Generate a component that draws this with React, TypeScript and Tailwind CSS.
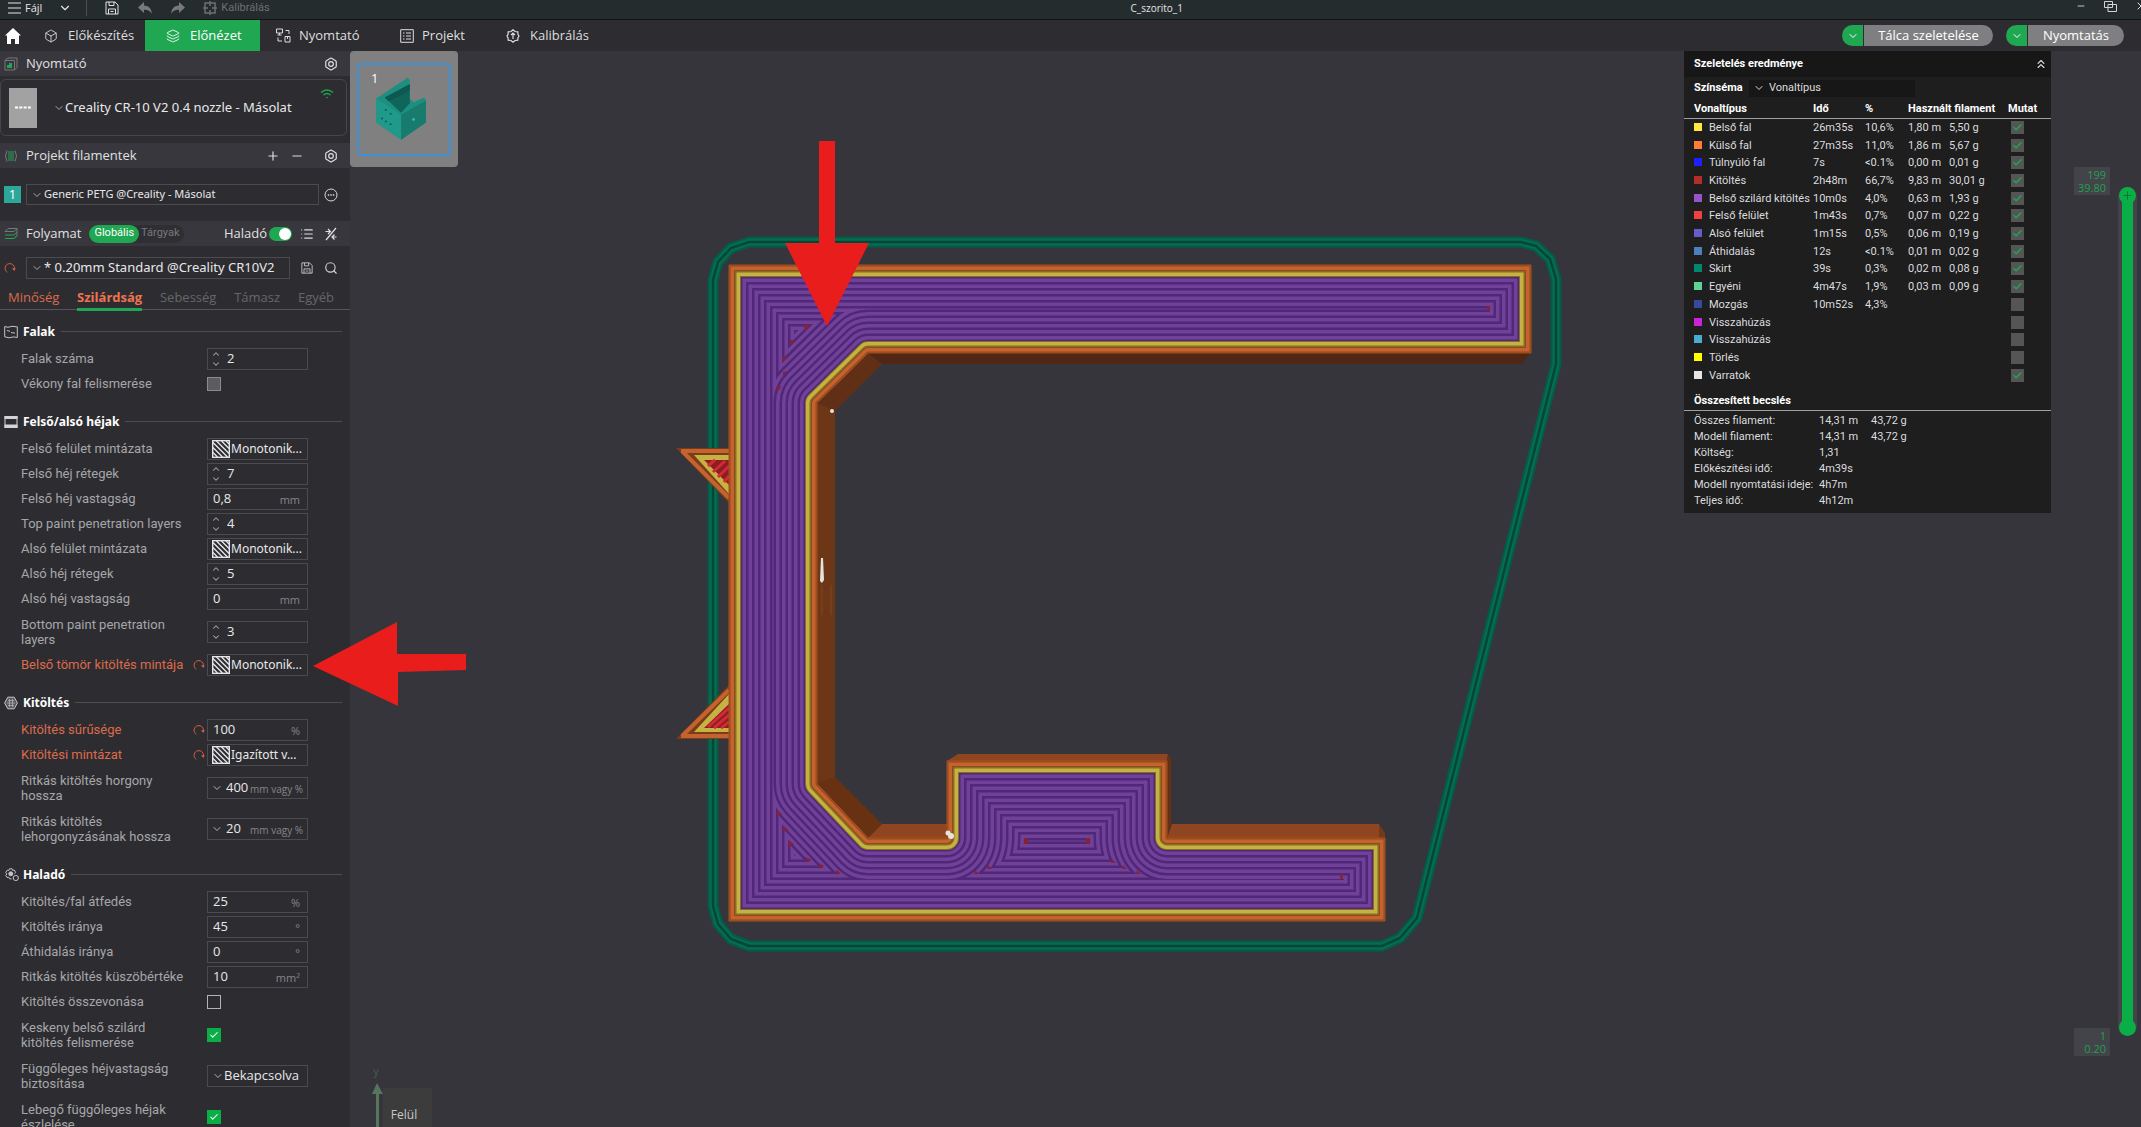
import type { ReactNode } from 'react'
import {
  Bolt,
  Box,
  Check,
  ChevronDown,
  ChevronsUp,
  ChevronUp,
  Layers,
  List,
  Minus,
  Plus,
  Search,
  X,
} from 'lucide-react'

type Control =
  | { kind: 'spin'; value: string }
  | { kind: 'text'; value: string; unit: string }
  | { kind: 'combo'; value: string; unit: string }
  | { kind: 'pattern'; value: string }
  | { kind: 'select'; value: string }
  | { kind: 'check'; checked: boolean; disabled?: boolean }

interface Setting {
  label: string
  control: Control
  /** Differs from the preset, shown in orange with a reset arrow */
  modified?: boolean
}

interface Section {
  title: string
  icon: ReactNode
  settings: Setting[]
}

const SECTIONS: Section[] = [
  {
    title: 'Falak',
    icon: (
      <svg viewBox="0 0 14 14" className="size-3.5" fill="none" stroke="#c4c4c6">
        <path d="M.7 1.500 4 2.300 8 1.300l5.300.6v10.600l-4-.6-4 .9-4.600-1zM3 5.500l3 .8M7 7.500l4 .6" />
      </svg>
    ),
    settings: [
      { label: 'Falak száma', control: { kind: 'spin', value: '2' } },
      { label: 'Vékony fal felismerése', control: { kind: 'check', checked: false, disabled: true } },
    ],
  },
  {
    title: 'Felső/alsó héjak',
    icon: (
      <svg viewBox="0 0 14 14" className="size-3.5" fill="#d4d4d6">
        <path d="M.5 1h13v3H.5zM.5 9.500h13v3.500H.5z" />
        <path d="M.5 1h1v12h-1zM12.500 1h1v12h-1z" />
      </svg>
    ),
    settings: [
      { label: 'Felső felület mintázata', control: { kind: 'pattern', value: 'Monotonik...' } },
      { label: 'Felső héj rétegek', control: { kind: 'spin', value: '7' } },
      { label: 'Felső héj vastagság', control: { kind: 'text', value: '0,8', unit: 'mm' } },
      { label: 'Top paint penetration layers', control: { kind: 'spin', value: '4' } },
      { label: 'Alsó felület mintázata', control: { kind: 'pattern', value: 'Monotonik...' } },
      { label: 'Alsó héj rétegek', control: { kind: 'spin', value: '5' } },
      { label: 'Alsó héj vastagság', control: { kind: 'text', value: '0', unit: 'mm' } },
      { label: 'Bottom paint penetration layers', control: { kind: 'spin', value: '3' } },
      {
        label: 'Belső tömör kitöltés mintája',
        control: { kind: 'pattern', value: 'Monotonik...' },
        modified: true,
      },
    ],
  },
  {
    title: 'Kitöltés',
    icon: (
      <svg viewBox="0 0 14 14" className="size-3.5" fill="#5c5c60" stroke="#c4c4c6">
        <path d="M3.800 1.200h6.400L13.400 7l-3.200 5.800H3.800L.6 7z" />
        <path d="M4 4.500h6M3 7h8M4 9.500h6M5.500 3v8M8.500 3v8" strokeWidth=".6" />
      </svg>
    ),
    settings: [
      { label: 'Kitöltés sűrűsége', control: { kind: 'text', value: '100', unit: '%' }, modified: true },
      { label: 'Kitöltési mintázat', control: { kind: 'pattern', value: 'Igazított v...' }, modified: true },
      { label: 'Ritkás kitöltés horgony hossza', control: { kind: 'combo', value: '400', unit: 'mm vagy %' } },
      {
        label: 'Ritkás kitöltés lehorgonyzásának hossza',
        control: { kind: 'combo', value: '20', unit: 'mm vagy %' },
      },
    ],
  },
  {
    title: 'Haladó',
    icon: (
      <svg viewBox="0 0 15 14" className="h-3.5 w-4" fill="none" stroke="#c4c4c6">
        <path d="M5 .8h2.600l.5 1.600 1.700-.3 1.300 2.200-1 1.400M5 .8l-.6 1.600-1.700-.2L1.200 4.500l1.200 1.400-1.200 1.400 1.400 2.200 1.700-.2.8 1.500h2" />
        <circle cx="6.300" cy="5.800" r="2" fill="#c4c4c6" />
        <circle cx="11.300" cy="10" r="2.600" />
      </svg>
    ),
    settings: [
      { label: 'Kitöltés/fal átfedés', control: { kind: 'text', value: '25', unit: '%' } },
      { label: 'Kitöltés iránya', control: { kind: 'text', value: '45', unit: '°' } },
      { label: 'Áthidalás iránya', control: { kind: 'text', value: '0', unit: '°' } },
      { label: 'Ritkás kitöltés küszöbértéke', control: { kind: 'text', value: '10', unit: 'mm²' } },
      { label: 'Kitöltés összevonása', control: { kind: 'check', checked: false } },
      { label: 'Keskeny belső szilárd kitöltés felismerése', control: { kind: 'check', checked: true } },
      { label: 'Függőleges héjvastagság biztosítása', control: { kind: 'select', value: 'Bekapcsolva' } },
      { label: 'Lebegő függőleges héjak észlelése', control: { kind: 'check', checked: true } },
    ],
  },
]

const LINE_TYPES = [
  { color: 'bg-[#ffe640]', name: 'Belső fal', time: '26m35s', pct: '10,6%', m: '1,80 m', g: '5,50 g', on: true },
  { color: 'bg-[#ff7d38]', name: 'Külső fal', time: '27m35s', pct: '11,0%', m: '1,86 m', g: '5,67 g', on: true },
  { color: 'bg-[#1f1fff]', name: 'Túlnyúló fal', time: '7s', pct: '<0.1%', m: '0,00 m', g: '0,01 g', on: true },
  { color: 'bg-[#b03029]', name: 'Kitöltés', time: '2h48m', pct: '66,7%', m: '9,83 m', g: '30,01 g', on: true },
  { color: 'bg-[#9654cc]', name: 'Belső szilárd kitöltés', time: '10m0s', pct: '4,0%', m: '0,63 m', g: '1,93 g', on: true },
  { color: 'bg-[#f04040]', name: 'Felső felület', time: '1m43s', pct: '0,7%', m: '0,07 m', g: '0,22 g', on: true },
  { color: 'bg-[#665cc7]', name: 'Alsó felület', time: '1m15s', pct: '0,5%', m: '0,06 m', g: '0,19 g', on: true },
  { color: 'bg-[#4d80ba]', name: 'Áthidalás', time: '12s', pct: '<0.1%', m: '0,01 m', g: '0,02 g', on: true },
  { color: 'bg-[#00876e]', name: 'Skirt', time: '39s', pct: '0,3%', m: '0,02 m', g: '0,08 g', on: true },
  { color: 'bg-[#5ed194]', name: 'Egyéni', time: '4m47s', pct: '1,9%', m: '0,03 m', g: '0,09 g', on: true },
  { color: 'bg-[#38489b]', name: 'Mozgás', time: '10m52s', pct: '4,3%', m: '', g: '', on: false },
  { color: 'bg-[#cd22d6]', name: 'Visszahúzás', time: '', pct: '', m: '', g: '', on: false },
  { color: 'bg-[#49adcf]', name: 'Visszahúzás', time: '', pct: '', m: '', g: '', on: false },
  { color: 'bg-[#ffff00]', name: 'Törlés', time: '', pct: '', m: '', g: '', on: false },
  { color: 'bg-[#e6e6e6]', name: 'Varratok', time: '', pct: '', m: '', g: '', on: true },
]

const TOTALS = [
  ['Összes filament:', '14,31 m', '43,72 g'],
  ['Modell filament:', '14,31 m', '43,72 g'],
  ['Költség:', '1,31', ''],
  ['Előkészítési idő:', '4m39s', ''],
  ['Modell nyomtatási ideje:', '4h7m', ''],
  ['Teljes idő:', '4h12m', ''],
]

function FloppyIcon({ className }: { className: string }) {
  return (
    <svg viewBox="0 0 14 14" className={className} fill="none" stroke="currentColor" aria-hidden="true">
      <path d="M1 1h9l3 3v9H1zM4 1v3.500h5V1M3.500 13V8h7v5M5.500 10.500h3" />
    </svg>
  )
}

function ResetIcon({ className }: { className: string }) {
  return (
    <svg viewBox="0 0 12 12" className={className} fill="none" stroke="#d9603f" aria-hidden="true">
      <path d="M3.300 10.300A4.700 4.700 0 1 1 10.500 6.500" />
      <path d="M8 6.200h3.800L10.300 9z" fill="#d9603f" stroke="none" />
    </svg>
  )
}

function HatchIcon() {
  return (
    <svg viewBox="0 0 18 18" className="size-[18px] shrink-0" fill="none" stroke="#e6e6e8" aria-hidden="true">
      <rect x=".7" y=".7" width="16.600" height="16.600" strokeWidth="1.400" />
      <path d="M1 12.500 5.500 17M1 7.500 10.500 17M1 2.500 15.500 17M4.500 1 17 13.500M9.500 1 17 8.500M14 1l3 3" strokeWidth="1.400" />
    </svg>
  )
}

function CheckBox({ id, checked, disabled = false }: { id: string; checked: boolean; disabled?: boolean }) {
  return (
    <span className="relative flex size-3.5">
      <input
        id={id}
        type="checkbox"
        defaultChecked={checked}
        disabled={disabled}
        className="size-3.5 appearance-none border border-[#b4b4b6] checked:border-[#0aae46] checked:bg-[#0aae46] disabled:border-[#8b8b8e] disabled:bg-[#5c5c60]"
      />
      {checked && (
        <Check className="pointer-events-none absolute inset-0.5 size-2.5 text-white" strokeWidth={2.5} />
      )}
    </span>
  )
}

function SettingControl({ id, control }: { id: string; control: Control }) {
  if (control.kind === 'check') {
    return <CheckBox id={id} checked={control.checked} disabled={control.disabled} />
  }

  return (
    <div className="flex h-[22px] w-[101px] items-center border border-[#4b4b4f] text-[#e8e8ea]">
      {control.kind === 'spin' && (
        <>
          <span className="flex w-[19px] shrink-0 flex-col items-start pl-0.5 text-[#a8a8aa]">
            <ChevronUp className="h-2.5 w-3" strokeWidth={2.5} />
            <ChevronDown className="h-2.5 w-3" strokeWidth={2.5} />
          </span>
          <input id={id} defaultValue={control.value} className="w-16 min-w-0 bg-transparent outline-none" />
        </>
      )}
      {control.kind === 'text' && (
        <>
          <input id={id} defaultValue={control.value} className="w-0 min-w-0 flex-1 bg-transparent pl-[5px] outline-none" />
          <span className="pt-1 pr-[7px] text-[11px] text-[#85858a]">{control.unit}</span>
        </>
      )}
      {control.kind === 'combo' && (
        <>
          <ChevronDown className="mr-[3px] ml-[3px] size-3 shrink-0 text-[#b4b4b6]" strokeWidth={2} />
          <input id={id} defaultValue={control.value} className="w-0 min-w-0 flex-1 bg-transparent outline-none" />
          <span className="pt-1 pr-1 text-[10px] whitespace-nowrap text-[#85858a]">{control.unit}</span>
        </>
      )}
      {control.kind === 'pattern' && (
        <>
          <span className="flex pl-1">
            <HatchIcon />
          </span>
          <select
            id={id}
            className="min-w-0 flex-1 appearance-none overflow-hidden bg-transparent pl-px font-['Noto_Sans',sans-serif] text-[12px] outline-none"
          >
            <option>{control.value}</option>
          </select>
        </>
      )}
      {control.kind === 'select' && (
        <>
          <ChevronDown className="ml-1 size-3 shrink-0 text-[#b4b4b6]" strokeWidth={2} />
          <select id={id} className="min-w-0 flex-1 appearance-none bg-transparent outline-none">
            <option>{control.value}</option>
          </select>
        </>
      )}
    </div>
  )
}

function SettingsSection({ section }: { section: Section }) {
  return (
    <section className="mb-[11px]">
      <div className="flex h-[29px] items-center pr-2 pl-1">
        <span className="flex w-[19px] shrink-0">{section.icon}</span>
        <h3 className="font-['Noto_Sans',sans-serif] text-[12px] font-bold text-white">{section.title}</h3>
        <span className="ml-1.5 h-px flex-1 bg-[#4d4d51]" />
      </div>
      {section.settings.map((s, i) => {
        const id = `${section.title}-${i}`
        return (
          <div key={id} className={`flex items-center pl-[21px] ${s.label.length > 28 ? 'h-[41px]' : 'h-[25px]'}`}>
            <label
              htmlFor={id}
              className={`mr-1 w-[168px] shrink-0 font-[Roboto,sans-serif] leading-[15px] ${s.modified ? 'text-[#dd6a4b]' : 'text-[#a6a6a9]'}`}
            >
              {s.label}
            </label>
            <span className="w-3.5 shrink-0">{s.modified && <ResetIcon className="size-3" />}</span>
            <SettingControl id={id} control={s.control} />
          </div>
        )
      })}
    </section>
  )
}

function PanelHeader({ icon, title, children }: { icon: ReactNode; title: string; children: ReactNode }) {
  return (
    <div className="flex h-[25px] items-center bg-[#37373d] pr-3 pl-1 text-[#e0e0e2]">
      <span className="flex w-[22px] shrink-0">{icon}</span>
      <h2>{title}</h2>
      {children}
    </div>
  )
}

function Sidebar() {
  return (
    <aside className="flex w-[350px] shrink-0 flex-col overflow-hidden bg-[#2d2d31] text-[13px]">
      <PanelHeader
        title="Nyomtató"
        icon={
          <svg viewBox="0 0 14 14" className="size-3.5" fill="none" stroke="#77777b">
            <path d="M1 3.500 3.500 1H13v9.500L10.500 13H1zM10.500 3.500V13M1 3.500h9.500" />
            <path d="M3 11V8h2V6h3v5z" fill="#1fa851" stroke="none" />
          </svg>
        }
      >
        <button aria-label="Nyomtató beállításai" className="ml-auto">
          <Bolt className="size-3.5" />
        </button>
      </PanelHeader>
      <div className="mt-[3px] mr-[3px] flex h-[57px] items-center rounded-md border border-[#47474b] pr-3 pl-2">
        <svg viewBox="0 0 28 40" className="h-10 w-7 shrink-0" aria-hidden="true">
          <path d="M0 0h28v40H0z" fill="#a2a2a3" />
          <path d="M6 19.500h16" stroke="#fff" strokeWidth="2" strokeDasharray="3 1.300" />
        </svg>
        <ChevronDown className="ml-4 size-3 shrink-0 text-[#a8a8aa]" strokeWidth={2} />
        <select
          aria-label="Nyomtató"
          className="flex-1 appearance-none bg-transparent font-['Noto_Sans',sans-serif] text-[#e8e8ea] outline-none"
        >
          <option>Creality CR-10 V2 0.4 nozzle - Másolat</option>
        </select>
        <svg viewBox="0 0 14 12" className="mb-7 h-3 w-3.5 shrink-0" fill="none" stroke="#1fa851" strokeWidth="1.400">
          <path d="M1 4.500Q7-.5 13 4.500M3.500 7Q7 4 10.500 7" />
          <circle cx="7" cy="9.500" r=".8" fill="#1fa851" stroke="none" />
        </svg>
      </div>

      <div className="mt-[7px]">
        <PanelHeader
          title="Projekt filamentek"
          icon={
            <svg viewBox="0 0 14 14" className="size-3.5" fill="none" stroke="#77777b">
              <path d="M3 1.500Q0 7 3 12.500M11 1.500Q14 7 11 12.500" />
              <path d="M5 2v10M7 2v10M9 2v10" stroke="#1fa851" />
            </svg>
          }
        >
          <button aria-label="Hozzáadás" className="ml-auto">
            <Plus className="size-3.5" />
          </button>
          <button aria-label="Eltávolítás" className="ml-2.5">
            <Minus className="size-3.5" />
          </button>
          <button aria-label="Filament beállításai" className="ml-5">
            <Bolt className="size-3.5" />
          </button>
        </PanelHeader>
      </div>
      <div className="mt-4 flex h-[21px] items-center pr-3 pl-1">
        <span className="mr-[5px] flex size-[17px] items-center justify-center bg-[#2ba89a] text-white">1</span>
        <div className="flex h-[21px] flex-1 items-center border border-[#4b4b4f]">
          <ChevronDown className="ml-1 size-3 shrink-0 text-[#a8a8aa]" strokeWidth={2} />
          <select
            aria-label="Filament"
            className="flex-1 appearance-none bg-transparent pl-px font-['Noto_Sans',sans-serif] text-[11px] text-[#e8e8ea] outline-none"
          >
            <option>Generic PETG @Creality - Másolat</option>
          </select>
        </div>
        <button aria-label="Továbbiak" className="ml-[5px]">
          <svg viewBox="0 0 14 14" className="size-3.5" fill="none" stroke="#d8d8da">
            <circle cx="7" cy="7" r="6" />
            <path d="M3.800 7h6.400" strokeWidth="1.300" strokeDasharray="1.400 1.100" />
          </svg>
        </button>
      </div>

      <div className="mt-4">
        <PanelHeader
          title="Folyamat"
          icon={
            <svg viewBox="0 0 14 14" className="size-3.5" fill="none" stroke="#77777b">
              <path d="M1 4.500 4 1.500h9l-3 3zM1 11.500h9l3-3v-7" />
              <path d="M1 8h9l3-3M1 11.500h9l3-3" stroke="#1fa851" />
            </svg>
          }
        >
          <div className="ml-2 flex h-[18px] items-center rounded-full bg-[#2f2f33] pr-1 font-[Roboto,sans-serif] text-[11px]">
            <button className="h-[18px] rounded-full bg-[#1fa851] px-[5px] text-white">Globális</button>
            <button className="pl-0.5 text-[#77777b]">Tárgyak</button>
          </div>
          <label htmlFor="advanced" className="ml-auto">
            Haladó
          </label>
          <span className="relative ml-0.5 flex">
            <input
              id="advanced"
              type="checkbox"
              role="switch"
              defaultChecked
              className="h-3.5 w-[23px] appearance-none rounded-full bg-[#1fa851]"
            />
            <span className="pointer-events-none absolute top-px right-px size-3 rounded-full bg-white" />
          </span>
          <button aria-label="Lista" className="ml-2">
            <List className="size-3.5" />
          </button>
          <button aria-label="Összehasonlítás" className="ml-2.5">
            <svg viewBox="0 0 14 14" className="size-3.5" fill="none" stroke="#e0e0e2" strokeWidth="1.200">
              <path d="M12 1 2 13M1.500 4.500H6M4 2l2.500 2.500L4 7M12.500 10H8M10.500 7.500 8 10l2.500 2.500" />
            </svg>
          </button>
        </PanelHeader>
      </div>
      <div className="mt-[11px] flex h-[22px] items-center pr-3 pl-1">
        <ResetIcon className="mr-2.5 size-3" />
        <div className="mr-[11px] flex h-[22px] flex-1 items-center border border-[#4b4b4f]">
          <ChevronDown className="ml-1 size-3 shrink-0 text-[#a8a8aa]" strokeWidth={2} />
          <select
            aria-label="Folyamat"
            className="flex-1 appearance-none bg-transparent pl-px font-['Noto_Sans',sans-serif] text-[#e8e8ea] outline-none"
          >
            <option>* 0.20mm Standard @Creality CR10V2</option>
          </select>
        </div>
        <button aria-label="Mentés">
          <FloppyIcon className="size-3 text-[#d0d0d2]" />
        </button>
        <button aria-label="Keresés" className="ml-[11px] text-[#d0d0d2]">
          <Search className="size-3.5" />
        </button>
      </div>

      <nav className="mt-[7px] flex h-6 items-center justify-between border-b border-[#55555a] pr-4 pl-2 text-[#66666a]">
        <button className="text-[#dd6a4b]">Minőség</button>
        <button className="relative h-6 font-bold text-[#ee7350]">
          Szilárdság
          <span className="absolute inset-x-0 -bottom-px h-[3px] bg-[#1fa851]" />
        </button>
        <button>Sebesség</button>
        <button>Támasz</button>
        <button>Egyéb</button>
      </nav>

      <div className="min-h-0 flex-1 overflow-hidden pt-[7px]">
        {SECTIONS.map((s) => (
          <SettingsSection key={s.title} section={s} />
        ))}
      </div>
    </aside>
  )
}

const PART =
  'M729 265H1531V353H868L817 403V784L868 838H947V761H1167V838H1385V921H729Z'
const SKIRT =
  'M749 242H1521L1536 246 1550 259 1556 279V364L1417 918 1400 938 1382 946H749L731 939 718 924 713 906V280L718 262 731 248Z'

/** Extrusion lines from the innermost outwards, each one 6 units wide */
const RINGS = Array.from({ length: 14 }, (_, i) => 13 - i)

function ringColors(i: number) {
  if (i === 0) return ['#8f4a1e', '#c5622e']
  if (i === 1) return ['#85701f', '#c6b243']
  return ['#502878', '#71419a']
}

function Toolpaths() {
  return (
    <svg
      viewBox="350 51 1791 1076"
      preserveAspectRatio="xMidYMid meet"
      className="pointer-events-none absolute inset-0 h-full w-full overflow-visible"
      aria-label="Szeletelt rétegek"
    >
      <clipPath id="part">
        <path d={PART} />
      </clipPath>

      <g fill="none">
        <path d={SKIRT} stroke="#045c47" strokeWidth="11" />
        <path d={SKIRT} stroke="#066c52" strokeWidth="7" />
        <path d={SKIRT} stroke="#034737" strokeWidth="2.500" />
      </g>

      {/* side walls below the visible layer */}
      <path d="M868 353H1531L1521 364H882Z" fill="#4f2714" />
      <path d="M868 353 882 364 835 411 817 403Z" fill="#612f15" />
      <path d="M817 403 835 411V777L817 784Z" fill="#6d3617" />
      <path d="M817 784 835 777 882 824 868 838Z" fill="#683212" />
      <path d="M868 838 882 824H947V838ZM947 761 958 754H1168L1167 761ZM1167 838 1172 824H1379L1385 838Z" fill="#8f451f" />
      <path d="M1167 761 1168 754 1171 759V824L1167 838Z" fill="#663015" />
      <path d="M1379 824 1385 833V838H1379Z" fill="#753819" />
      <path d="M822 585V615M831 585V615" stroke="#84451f" />

      {/* small triangular pins on the left */}
      <g>
        <path d="M676 448H729V503Z" fill="#7a3d1a" />
        <path d="M681 451H729M682 451 729 498" fill="none" stroke="#c5622e" strokeWidth="4" />
        <path d="M694 455H729V494Z" fill="#c6b243" />
        <path d="M704 460H729V485Z" fill="#8f1c22" />
        <path d="M708 466 715 460M713 472 725 461M718 477 729 466M724 482 729 476" stroke="#cf2b35" strokeWidth="3" />
        <path d="M676 739H729V685Z" fill="#7a3d1a" />
        <path d="M681 736H729M682 736 729 690" fill="none" stroke="#c5622e" strokeWidth="4" />
        <path d="M694 732H729V694Z" fill="#c6b243" />
        <path d="M704 728H729V704Z" fill="#8f1c22" />
        <path d="M708 727 729 708M714 728 729 715M721 728 729 722" stroke="#cf2b35" strokeWidth="3" />
      </g>

      <g clipPath="url(#part)">
        <path d={PART} fill="#71419a" />
        {RINGS.map((i) => {
          const [edge, core] = ringColors(i)
          return (
            <g key={i} fill="none" strokeLinejoin="round">
              <path d={PART} stroke={edge} strokeWidth={12 * i + 12} />
              <path d={PART} stroke={core} strokeWidth={12 * i + 10} />
              <path d={PART} stroke={edge} strokeWidth={12 * i + 3} />
            </g>
          )
        })}
      </g>
      <path d={PART} fill="none" stroke="#a9501f" />

      {/* gaps left by the solid infill */}
      <path
        d="M804 325h7l-6 6zM789 340h6l-4 5zM782 357h6l-5 5zM783 372l4-1-4 6zM777 387l5-1-5 7zM777 811l5 3-5 3zM783 826l5 3-5 3zM788 840l6 4-5 3zM805 857l7 3-5 2zM819 863l5 3-5 3zM836 870l5 3-5 2zM1024 838h4v6h-4zM1086 838h4v6h-4zM988 865l4 4h-5zM975 870l4 4h-5zM1112 859l4 4h-5zM1123 865l4 4h-5zM1137 870l4 4h-5zM1487 306h3v5h-3zM1340 874h3v5h-3z"
        fill="#842338"
      />

      {/* seams */}
      <g fill="#e6e2df">
        <circle cx="832" cy="411" r="2" />
        <path d="M821 558h2l1 22-2 3-2-2z" />
        <circle cx="948" cy="833" r="2.500" />
        <circle cx="951" cy="836" r="3" />
      </g>

      <g fill="#e81d1c">
        <path d="M819 141H835V243H869L827 326 785 243H819Z" />
        <path d="M313 666 397 622V654L466 654V670L398 672V706Z" />
      </g>

      {/* axis gizmo */}
      <path d="M383 1088H432V1127H383Z" fill="#3c3c3c" />
      <path d="M376 1092H379V1127H376ZM377 1083 383 1094H372Z" fill="#56755c" />
      <text x="404" y="1119" textAnchor="middle" fontSize="12" fill="#c8c8c8">
        Felül
      </text>
      <text x="376" y="1075" textAnchor="middle" fontSize="11" fill="#4a5c4f">
        y
      </text>
    </svg>
  )
}

function PlateThumbnail() {
  return (
    <button className="absolute top-0 left-0 h-[116px] w-[108px] rounded-sm bg-[#808081] p-[7px]">
      <span className="relative block h-[93px] rounded-sm border-2 border-[#3f8fd6]">
        <span className="absolute top-1 left-3 text-[13px] text-white">1</span>
        <svg viewBox="357 57 94 93" className="h-full w-full" aria-hidden="true">
          <path d="M375 92 408 70 410 73V92L414 96 425 91 427 94V117L401 135 375 117Z" fill="#1c8f80" />
          <path d="M384 91 410 77V97L401 107Z" fill="#10655a" />
          <path d="M384 91 410 77V84L388 95Z" fill="#0d584f" />
          <path d="M375 92 401 109V135L375 117Z" fill="#1f9a8a" />
          <path d="M401 109 427 94V117L401 135Z" fill="#187b6e" />
          <circle cx="414" cy="114" r="1.500" fill="#35b8a6" />
          <path d="M384 104h2M389 108h2M384 116h2M389 119h2M380 113h2" stroke="#0d584f" strokeWidth="1.500" />
        </svg>
      </span>
    </button>
  )
}

function SliceResult() {
  return (
    <section className="mr-[90px] w-[367px] shrink-0 self-start bg-[#1e1e1e] pb-1 font-[Roboto,sans-serif] text-[11px] text-[#dcdcde]">
      <div className="flex h-[26px] items-center justify-between bg-[#171717] pr-[3px] pl-2.5">
        <h2 className="font-bold text-white">Szeletelés eredménye</h2>
        <button aria-label="Összecsukás">
          <ChevronsUp className="size-3.5" />
        </button>
      </div>
      <div className="flex h-[22px] items-center pl-2.5">
        <label htmlFor="scheme" className="w-[55px] font-bold text-white">
          Színséma
        </label>
        <span className="flex h-[17px] w-[166px] items-center bg-[#171717]">
          <ChevronDown className="mx-1 size-3" />
          <select id="scheme" className="flex-1 appearance-none bg-transparent outline-none">
            <option>Vonaltípus</option>
          </select>
        </span>
      </div>
      <table className="h-[285px] w-full table-fixed border-collapse text-left leading-[15px] whitespace-nowrap">
        <colgroup>
          <col className="w-[129px]" />
          <col className="w-[52px]" />
          <col className="w-[43px]" />
          <col className="w-[41px]" />
          <col className="w-[59px]" />
          <col />
        </colgroup>
        <thead>
          <tr className="h-[19px] border-b border-[#a0a0a0] text-white">
            <th className="pl-2.5">Vonaltípus</th>
            <th>Idő</th>
            <th>%</th>
            <th colSpan={2}>Használt filament</th>
            <th>Mutat</th>
          </tr>
        </thead>
        <tbody>
          {LINE_TYPES.map((row, i) => (
            <tr key={i}>
              <td className="p-0 pl-2.5">
                <span className={`mr-[7px] inline-block size-2 ${row.color}`} />
                {row.name}
              </td>
              <td className="p-0">{row.time}</td>
              <td className="p-0">{row.pct}</td>
              <td className="p-0">{row.m}</td>
              <td className="p-0">{row.g}</td>
              <td className="p-0">
                <span className="relative ml-[3px] flex size-[13px]">
                  <input
                    type="checkbox"
                    aria-label={`${row.name} mutatása`}
                    defaultChecked={row.on}
                    className="size-[13px] appearance-none bg-[#555556]"
                  />
                  {row.on && (
                    <Check className="pointer-events-none absolute inset-px size-[11px] text-[#1fa851]" strokeWidth={3} />
                  )}
                </span>
              </td>
            </tr>
          ))}
        </tbody>
      </table>
      <h3 className="mt-2 flex h-[19px] items-center border-b border-[#a0a0a0] pl-2.5 font-bold text-white">
        Összesített becslés
      </h3>
      <dl className="pt-0.5">
        {TOTALS.map(([label, first, second]) => (
          <div key={label} className="flex h-4 items-center pl-2.5 whitespace-nowrap">
            <dt className="w-[125px]">{label}</dt>
            <dd className="w-[52px]">{first}</dd>
            <dd>{second}</dd>
          </div>
        ))}
      </dl>
    </section>
  )
}

const RANGE_CLASS =
  'pointer-events-none absolute inset-0 h-full w-full appearance-none bg-transparent [direction:rtl] [writing-mode:vertical-lr] [&::-webkit-slider-thumb]:pointer-events-auto [&::-webkit-slider-thumb]:size-[17px] [&::-webkit-slider-thumb]:appearance-none [&::-webkit-slider-thumb]:rounded-full [&::-webkit-slider-thumb]:bg-[#0aae46]'

function LayerSlider() {
  return (
    <div className="mt-[136px] mr-1 mb-[91px] flex shrink-0 gap-2">
      <div className="flex w-9 flex-col justify-between text-right text-[11px] leading-[13px] text-[#22a04f]">
        <output className="-mt-5 bg-[#43434a] px-1 py-px">
          199
          <br />
          39.80
        </output>
        <output className="-mb-5 bg-[#43434a] px-1 py-px">
          1
          <br />
          0.20
        </output>
      </div>
      <div className="relative w-[19px] rounded-full bg-[#43434a]">
        <span className="absolute inset-y-2 left-1 w-[11px] bg-[#0aae46]" />
        <input type="range" aria-label="Alsó réteg" min={1} max={199} defaultValue={1} className={RANGE_CLASS} />
        <input type="range" aria-label="Felső réteg" min={1} max={199} defaultValue={199} className={RANGE_CLASS} />
        <Plus className="pointer-events-none absolute top-0.5 left-[3px] size-[13px] text-[#0b6a2f]" strokeWidth={1.5} />
      </div>
    </div>
  )
}

function TitleBar() {
  return (
    <header className="grid h-5 grid-cols-[1.18fr_auto_1fr] items-start overflow-hidden border-b border-[#111314] bg-[#252c2e] text-[11px] leading-4 text-[#e4e4e6]">
      <div className="flex items-center">
        <button className="flex items-center gap-1 pl-2">
          <svg viewBox="0 0 13 12" className="h-3 w-[13px]" stroke="#e4e4e6" strokeWidth="1.200">
            <path d="M0 1h13M0 6h13M0 11h13" />
          </svg>
          Fájl
        </button>
        <ChevronDown className="ml-4 size-3.5" />
        <span className="ml-[14px] h-4 w-px bg-[#4b5052]" />
        <button aria-label="Mentés" className="ml-[18px]">
          <FloppyIcon className="size-3.5" />
        </button>
        <button aria-label="Visszavonás" className="ml-[19px] text-[#77797b]">
          <svg viewBox="0 0 14 12" className="h-3 w-3.5" fill="currentColor">
            <path d="M6 0v3.500C11 3.500 13.500 7 14 12 12 8.800 10 7.800 6 7.800V11L0 5.500z" />
          </svg>
        </button>
        <button aria-label="Mégis" className="ml-[19px] text-[#77797b]">
          <svg viewBox="0 0 14 12" className="h-3 w-3.5" fill="currentColor">
            <path d="M8 0v3.500C3 3.500.5 7 0 12c2-3.200 4-4.200 8-4.200V11l6-5.500z" />
          </svg>
        </button>
        <button className="ml-[18px] flex items-center gap-1 text-[#6c7072]">
          <svg viewBox="0 0 14 14" className="size-3.5" fill="none" stroke="currentColor" strokeWidth="1.500">
            <path d="M2 2h10v10H2zM7 0v5M7 9v5M0 7h5M9 7h5" />
          </svg>
          <span className="font-[Roboto,sans-serif]">Kalibrálás</span>
        </button>
      </div>
      <span className="text-[10px]">C_szorito_1</span>
      <div className="flex items-center justify-end gap-[18px]">
        <button aria-label="Kis méret">
          <Minus className="size-2.5" />
        </button>
        <button aria-label="Előző méret">
          <svg viewBox="0 0 13 11" className="h-[11px] w-[13px]" fill="none" stroke="#d4d4d6">
            <path d="M.5.5h8v6h-8zM4 3.500h8.500v7H4z" />
          </svg>
        </button>
        <button aria-label="Bezárás" className="-mr-1.5">
          <X className="size-3" />
        </button>
      </div>
    </header>
  )
}

function SplitButton({ label, className }: { label: string; className: string }) {
  return (
    <div className="flex h-[21px] gap-px text-[13px] text-white">
      <button aria-label={`${label} lehetőségek`} className="flex w-[21px] items-center justify-center rounded-l-full bg-[#1fa851]">
        <ChevronDown className="size-3" />
      </button>
      <button className={`rounded-r-full bg-[#7f7f81] leading-[21px] ${className}`}>{label}</button>
    </div>
  )
}

function NavBar() {
  return (
    <nav className="flex h-[31px] items-center bg-[#2d2d31] text-[13px] text-[#dededf]">
      <button aria-label="Kezdőlap" className="pl-[5px]">
        <svg viewBox="0 0 16 16" className="size-4" fill="#fff">
          <path d="M8 0 16 7.500h-2V16h-4v-5H6v5H2V7.500H0z" />
        </svg>
      </button>
      <button className="ml-[23px] flex w-[101px] items-center gap-2.5">
        <Box className="size-3.5" strokeWidth={1.5} />
        Előkészítés
      </button>
      <button className="flex h-full w-[115px] items-center gap-2.5 bg-[#1fa851] pl-[21px] text-white">
        <Layers className="size-3.5" strokeWidth={1.5} />
        Előnézet
      </button>
      <button className="ml-4 flex w-[124px] items-center gap-2">
        <svg viewBox="0 0 15 15" className="size-[15px]" fill="none" stroke="currentColor">
          <path d="M.5 1h6v4h-6zM3.500 5v2M1.500 7h4M9 8.500h5v5.500H9zM11.500 8.500V11M9.500 2.500H13V6M2 9.500V13h4" />
        </svg>
        Nyomtató
      </button>
      <button className="flex w-[106px] items-center gap-2">
        <svg viewBox="0 0 14 14" className="size-3.5" fill="none" stroke="currentColor">
          <path d="M.7.7h12.600v12.600H.7zM3 4h1.500M6 4h5M3 7h1.500M6 7h5M3 10h1.500M6 10h5" />
        </svg>
        Projekt
      </button>
      <button className="flex items-center gap-2.5">
        <svg viewBox="0 0 14 14" className="size-3.5" fill="none" stroke="currentColor" strokeWidth="1.200">
          <path d="M7 .8 9 2.500l2.800.3.200 2.700L13 7l-1 1.700-.2 2.500-2.800.3L7 13.200 5 11.500l-2.800-.3L2 8.700 1 7l1-1.500.2-2.700L5 2.500zM7 4v6M5 6l2-2 2 2" />
        </svg>
        Kalibrálás
      </button>
      <div className="mr-[17px] ml-auto flex gap-[13px]">
        <SplitButton label="Tálca szeletelése" className="w-[129px]" />
        <SplitButton label="Nyomtatás" className="w-24" />
      </div>
    </nav>
  )
}

export default function App() {
  return (
    <div className="flex h-screen flex-col overflow-hidden bg-[#35353b] font-['Open_Sans','Noto_Sans',sans-serif]">
      <TitleBar />
      <NavBar />
      <main className="flex min-h-0 flex-1">
        <Sidebar />
        <div className="relative flex min-w-0 flex-1">
          <Toolpaths />
          <PlateThumbnail />
          <div className="relative ml-auto flex min-h-0">
            <SliceResult />
            <div className="absolute inset-y-0 right-0 flex">
              <LayerSlider />
            </div>
          </div>
        </div>
      </main>
    </div>
  )
}
